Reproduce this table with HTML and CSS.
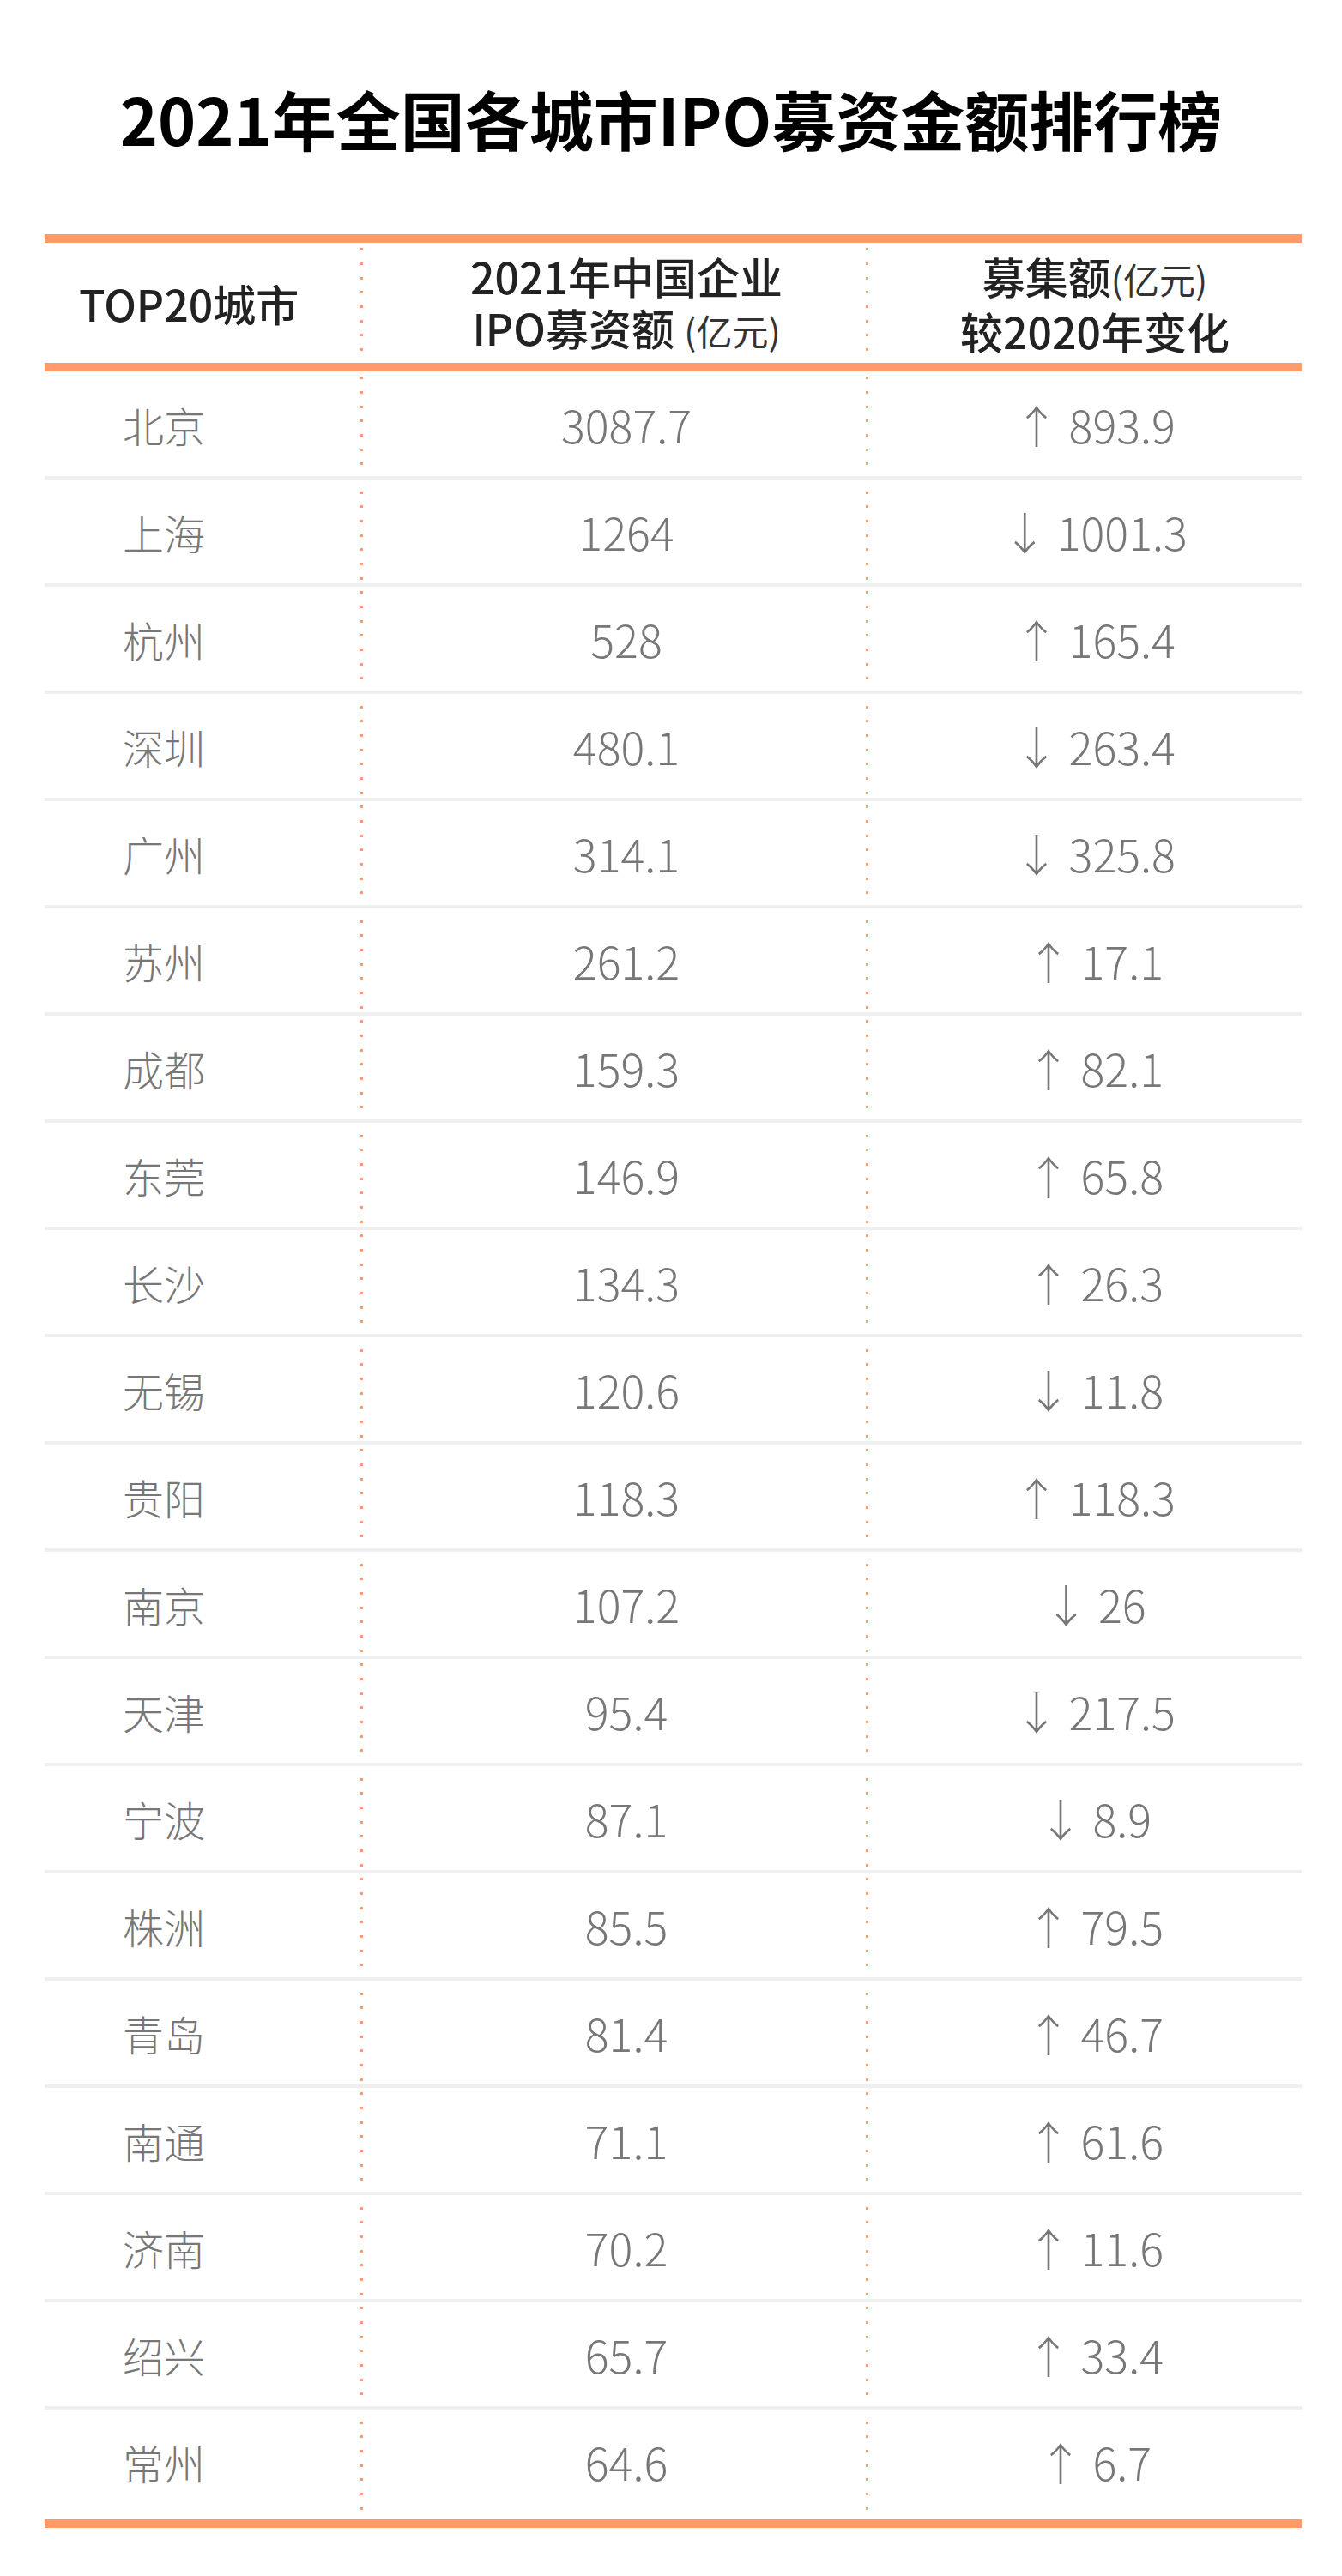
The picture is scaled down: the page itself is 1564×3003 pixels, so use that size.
FILE: index.html
```html
<!DOCTYPE html>
<html lang="zh-CN">
<head>
<meta charset="utf-8">
<title>2021年全国各城市IPO募资金额排行榜</title>
<link rel="stylesheet" href="styles.css">
</head>
<body>
<div class="page">
  <h1 class="title">2021年全国各城市IPO募资金额排行榜</h1>
  <div class="table">
    <div class="thead">
      <div class="th th-city">TOP20城市</div>
      <div class="th th-c2"><span class="line">2021年中国企业</span><span class="line">IPO募资额 <small>(亿元)</small></span></div>
      <div class="th th-c3"><span class="line">募集额<small>(亿元)</small></span><span class="line">较2020年变化</span></div>
    </div>
    <div class="tbody">
      <div class="row"><div class="city">北京</div><div class="num">3087.7</div><div class="chg">↑ 893.9</div></div>
      <div class="row"><div class="city">上海</div><div class="num">1264</div><div class="chg">↓ 1001.3</div></div>
      <div class="row"><div class="city">杭州</div><div class="num">528</div><div class="chg">↑ 165.4</div></div>
      <div class="row"><div class="city">深圳</div><div class="num">480.1</div><div class="chg">↓ 263.4</div></div>
      <div class="row"><div class="city">广州</div><div class="num">314.1</div><div class="chg">↓ 325.8</div></div>
      <div class="row"><div class="city">苏州</div><div class="num">261.2</div><div class="chg">↑ 17.1</div></div>
      <div class="row"><div class="city">成都</div><div class="num">159.3</div><div class="chg">↑ 82.1</div></div>
      <div class="row"><div class="city">东莞</div><div class="num">146.9</div><div class="chg">↑ 65.8</div></div>
      <div class="row"><div class="city">长沙</div><div class="num">134.3</div><div class="chg">↑ 26.3</div></div>
      <div class="row"><div class="city">无锡</div><div class="num">120.6</div><div class="chg">↓ 11.8</div></div>
      <div class="row"><div class="city">贵阳</div><div class="num">118.3</div><div class="chg">↑ 118.3</div></div>
      <div class="row"><div class="city">南京</div><div class="num">107.2</div><div class="chg">↓ 26</div></div>
      <div class="row"><div class="city">天津</div><div class="num">95.4</div><div class="chg">↓ 217.5</div></div>
      <div class="row"><div class="city">宁波</div><div class="num">87.1</div><div class="chg">↓ 8.9</div></div>
      <div class="row"><div class="city">株洲</div><div class="num">85.5</div><div class="chg">↑ 79.5</div></div>
      <div class="row"><div class="city">青岛</div><div class="num">81.4</div><div class="chg">↑ 46.7</div></div>
      <div class="row"><div class="city">南通</div><div class="num">71.1</div><div class="chg">↑ 61.6</div></div>
      <div class="row"><div class="city">济南</div><div class="num">70.2</div><div class="chg">↑ 11.6</div></div>
      <div class="row"><div class="city">绍兴</div><div class="num">65.7</div><div class="chg">↑ 33.4</div></div>
      <div class="row"><div class="city">常州</div><div class="num">64.6</div><div class="chg">↑ 6.7</div></div>
    </div>
  </div>
</div>
</body>
</html>
```

FILE: styles.css
```css
* { box-sizing: border-box; }
html, body { margin: 0; padding: 0; background: #fff; }
body {
  font-family: "Noto Sans CJK SC", "Noto Sans", sans-serif;
  color: #222;
}
.page {
  width: 1564px;
  height: 3003px;
  padding: 93px 47px 0 52px;
}
.title {
  margin: 0 -47px 90px -52px;
  height: 90px;
  line-height: 90px;
  font-size: 75px;
  font-weight: 700;
  color: #000;
  text-align: center;
}
.table {
  width: 1465px;
  border-top: 10px solid #ff9a6a;
  border-bottom: 10px solid #ff9a6a;
  background-image:
    repeating-linear-gradient(to bottom, transparent 0 6.2px, #ff9a6a 6.2px 9.2px, transparent 9.2px 16.667px),
    repeating-linear-gradient(to bottom, transparent 0 6.2px, #ff9a6a 6.2px 9.2px, transparent 9.2px 16.667px);
  background-size: 3px 100%, 3px 100%;
  background-repeat: no-repeat, no-repeat;
  background-position: 368px 0, 957px 0;
}
.thead {
  display: grid;
  grid-template-columns: 370px 589px 506px;
  height: 150px;
  border-bottom: 10px solid #ff9a6a;
  font-size: 50px;
  font-weight: 500;
  color: #222;
}
.th {
  display: flex;
  flex-direction: column;
  justify-content: center;
  align-items: center;
  line-height: 60px;
  white-space: nowrap;
}
.th small {
  font-size: 42px;
  font-weight: 400;
  color: #333;
}
.th-city {
  align-items: flex-start;
  padding-left: 40px;
}
.th-c2 { padding-left: 27px; }
.th-c3 { padding-left: 24px; }
.tbody {
  padding-top: 1px;
  padding-bottom: 7px;
}
.row {
  display: grid;
  grid-template-columns: 370px 589px 506px;
  height: 125px;
  border-bottom: 4px solid #efefef;
  align-items: center;
  color: #777;
  font-weight: 300;
  white-space: nowrap;
}
.row:last-child {
  height: 121px;
  border-bottom: 0;
}
.city {
  font-size: 48px;
  padding-left: 91px;
}
.num {
  font-size: 52px;
  text-align: center;
  padding-left: 27px;
}
.chg {
  font-size: 52px;
  text-align: center;
  padding-left: 24px;
}
```
